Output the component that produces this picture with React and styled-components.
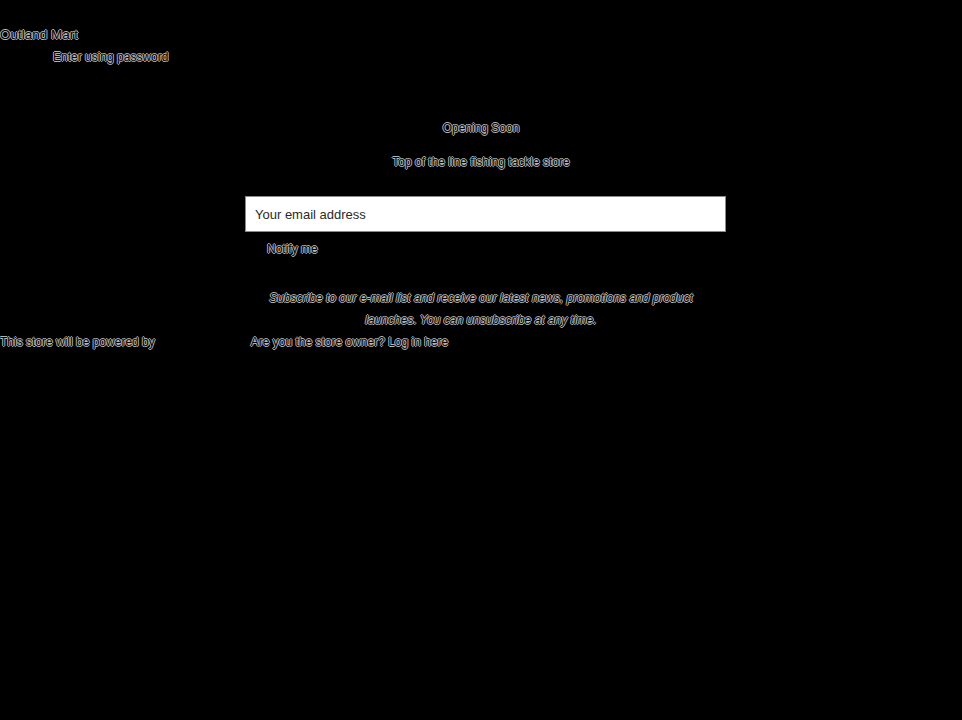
import React from "react";
import styled, { createGlobalStyle } from "styled-components";

const Global = createGlobalStyle`
  html, body { margin: 0; padding: 0; background: #000; }
  body {
    font-family: "Liberation Sans", Arial, sans-serif;
    font-size: 12px;
    line-height: 22px;
  }
`;

const outline = `
  color: #000;
  text-shadow: -1px 0 #b4b4b4, 1px 0 #b4b4b4, 0 -1px #b4b4b4, 0 1px #b4b4b4;
`;

const Page = styled.div`
  display: flex;
  flex-direction: column;
  padding-top: 24px;
  min-height: 100vh;
  box-sizing: border-box;
`;

const Header = styled.header`
  display: flex;
  flex-direction: column;
`;

const StoreName = styled.div`
  ${outline}
  font-size: 13.5px;
  margin: 0;
`;

const EnterLink = styled.a`
  ${outline}
  padding-left: 53px;
  text-decoration: none;
`;

const Main = styled.main`
  display: flex;
  flex-direction: column;
  align-items: center;
  margin-top: 49px;
`;

const Title = styled.h2`
  ${outline}
  font-size: 12px;
  font-weight: normal;
  margin: 0;
  text-align: center;
`;

const Tagline = styled.p`
  ${outline}
  margin: 12px 0 0;
  text-align: center;
`;

const Form = styled.form`
  display: flex;
  flex-direction: column;
  align-items: flex-start;
  width: 481px;
  margin-top: 23px;
  margin-left: 9px;
`;

const EmailInput = styled.input`
  box-sizing: border-box;
  width: 481px;
  height: 36px;
  border: 1px solid #8a8a8a;
  background: #fff;
  padding: 0 9px;
  font-family: "Liberation Sans", Arial, sans-serif;
  font-size: 13px;
  color: #222;
  outline: none;
  &::placeholder { color: #2a2a2a; }
`;

const NotifyButton = styled.button`
  ${outline}
  background: transparent;
  border: none;
  font-family: "Liberation Sans", Arial, sans-serif;
  font-size: 12px;
  line-height: 22px;
  padding: 0 0 0 22px;
  margin-top: 6px;
  cursor: pointer;
`;

const Disclaimer = styled.p`
  ${outline}
  font-style: italic;
  width: 440px;
  margin: 27px 0 0;
  text-align: center;
`;

const Footer = styled.footer`
  display: flex;
  align-items: center;
  gap: 96px;
`;

const FooterText = styled.span`
  ${outline}
`;

export default function App() {
  return (
    <>
      <Global />
      <Page>
        <Header>
          <StoreName>Outland Mart</StoreName>
          <EnterLink href="#">Enter using password</EnterLink>
        </Header>
        <Main>
          <Title>Opening Soon</Title>
          <Tagline>Top of the line fishing tackle store</Tagline>
          <Form onSubmit={(e) => e.preventDefault()}>
            <EmailInput type="email" placeholder="Your email address" />
            <NotifyButton type="submit">Notify me</NotifyButton>
          </Form>
          <Disclaimer>
            Subscribe to our e-mail list and receive our latest news, promotions and product launches. You can unsubscribe at any time.
          </Disclaimer>
        </Main>
        <Footer>
          <FooterText>This store will be powered by</FooterText>
          <FooterText>Are you the store owner? Log in here</FooterText>
        </Footer>
      </Page>
    </>
  );
}
